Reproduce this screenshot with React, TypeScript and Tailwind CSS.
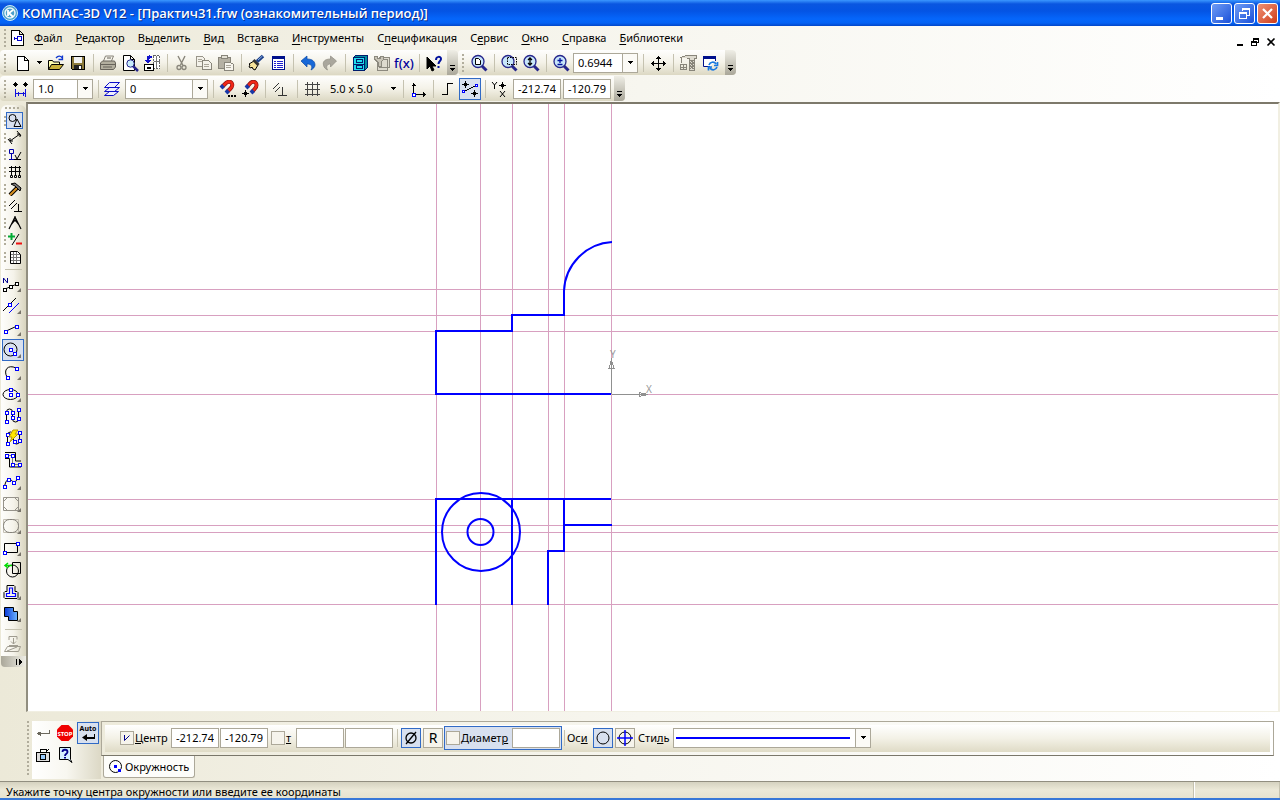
import type { ReactNode } from "react";
import clsx from "clsx";

const menuItems = [
  ["", "Ф", "айл"],
  ["", "Р", "едактор"],
  ["В", "ы", "делить"],
  ["", "В", "ид"],
  ["Вст", "а", "вка"],
  ["", "И", "нструменты"],
  ["С", "п", "ецификация"],
  ["С", "е", "рвис"],
  ["", "О", "кно"],
  ["", "С", "правка"],
  ["", "Б", "иблиотеки"],
];

type IconProps = { children: ReactNode; smooth?: boolean };

const Icon = ({ children, smooth }: IconProps) => (
  <svg
    viewBox="0 0 18 18"
    className="h-[18px] w-[18px] shrink-0"
    fill="none"
    stroke="#000"
    shapeRendering={smooth ? "auto" : "crispEdges"}
  >
    {children}
  </svg>
);

const Node = ({ x, y, color = "#00f" }: { x: number; y: number; color?: string }) => (
  <rect x={x - 1.5} y={y - 1.5} width="3" height="3" fill="#fff" stroke={color} shapeRendering="crispEdges" />
);

const ToolButton = ({ label, active, children }: { label: string; active?: boolean; children: ReactNode }) => (
  <button
    type="button"
    aria-label={label}
    title={label}
    className={clsx(
      "flex h-[22px] w-[22px] shrink-0 items-center justify-center border",
      active ? "border-[#316ac5] bg-[#d8e0ef]" : "border-transparent"
    )}
  >
    {children}
  </button>
);

const Separator = () => (
  <div className="flex w-2 shrink-0 justify-center">
    <div className="h-[18px] w-px bg-[#c5c2b0]" />
  </div>
);

const Grip = ({ tight }: { tight?: boolean }) => (
  <div className={clsx("ml-1 h-[18px] shrink-0", tight ? "w-[6px]" : "w-2")}>
    <div className="h-full w-[2px] bg-[repeating-linear-gradient(180deg,#b1ad9c_0_2px,transparent_2px_4px)]" />
  </div>
);

const Overflow = () => (
  <button
    type="button"
    aria-label="Параметры панели"
    className="flex h-[25px] w-[11px] shrink-0 items-end justify-center rounded-r-sm bg-linear-to-b from-[#efeee6] to-[#aaa799] pb-1"
  >
    <svg viewBox="0 0 5 6" className="h-[6px] w-[5px]" shapeRendering="crispEdges">
      <path d="M0 0h5v1H0zM0 3h5L2.500 6z" />
    </svg>
  </button>
);

const ArrowDown = () => (
  <svg viewBox="0 0 5 3" className="h-[3px] w-[5px]" shapeRendering="crispEdges">
    <path d="M0 0h5L2.500 3z" />
  </svg>
);

const Bar = ({ children }: { children: ReactNode }) => (
  <div className="flex h-[25px] items-center rounded-sm bg-linear-to-b from-[#fefefd] via-[#f4f2e8] to-[#dcd8c3]">
    {children}
  </div>
);

const Combo = ({ label, value, className }: { label: string; value: string; className: string }) => (
  <div className={clsx("relative h-5 shrink-0 border border-[#aca899] bg-white", className)}>
    <select aria-label={label} className="block h-full w-full appearance-none bg-transparent pl-1 outline-none">
      <option>{value}</option>
    </select>
    <div className="pointer-events-none absolute inset-y-0 right-0 flex w-[15px] items-center justify-center border-l border-[#aca899] bg-[#fbfaf6]">
      <ArrowDown />
    </div>
  </div>
);

const Field = ({ label, value = "" }: { label: string; value?: string }) => (
  <input
    type="text"
    aria-label={label}
    defaultValue={value}
    className="h-5 w-12 shrink-0 border border-[#aca899] bg-white px-1 outline-none"
  />
);

const Lens = ({ children }: { children?: ReactNode }) => (
  <Icon smooth>
    <path d="M12 12l4.500 4.500" stroke="#26268c" strokeWidth="3" />
    <circle cx="8" cy="7.500" r="6" fill="#c8e6fa" stroke="#26268c" strokeWidth="1.300" />
    {children}
  </Icon>
);

const TitleBar = () => (
  <header className="flex h-[26px] items-center bg-[linear-gradient(180deg,#3b97ff_0,#0a56e0_4px,#0454e4_11px,#0566fb_19px,#0462f4_23px,#0346c8_26px)] pr-[2px] pl-[2px]">
    <svg viewBox="0 0 16 16" className="h-4 w-4">
      <circle cx="8" cy="8" r="7.500" fill="#4a9fca" stroke="#cfe9f6" />
      <circle cx="8" cy="8" r="5" fill="none" stroke="#eaf6fb" strokeWidth="1.500" />
      <path d="M6 5v6M11 5L7 8l4 4" fill="none" stroke="#fff" strokeWidth="1.800" />
    </svg>
    <h1 className="ml-1 flex-1 font-['Open_Sans','Noto_Sans',sans-serif] text-[13px] leading-5 font-semibold whitespace-nowrap text-white [text-shadow:1px_1px_#0a2f8c]">
      КОМПАС-3D V12 - [Практич31.frw (ознакомительный период)]
    </h1>
    <div className="flex gap-[2px]">
      <button type="button" aria-label="Свернуть" className="h-[21px] w-[21px] rounded-[3px] border border-white bg-linear-to-br from-[#6f9bf5] to-[#1a4fd8]">
        <svg viewBox="0 0 19 19"><path d="M4 13h7v3H4z" fill="#fff" /></svg>
      </button>
      <button type="button" aria-label="Развернуть" className="h-[21px] w-[21px] rounded-[3px] border border-white bg-linear-to-br from-[#6f9bf5] to-[#1a4fd8]">
        <svg viewBox="0 0 19 19" fill="none" stroke="#fff" shapeRendering="crispEdges">
          <path d="M7.500 7V4.500h7v7H12M7 5.500h8M4.500 8.500h7v6h-7zM4 9.500h8" />
        </svg>
      </button>
      <button type="button" aria-label="Закрыть" className="h-[21px] w-[21px] rounded-[3px] border border-white bg-linear-to-br from-[#ee9073] to-[#cf3a12]">
        <svg viewBox="0 0 19 19"><path d="M5 5l9 9M14 5l-9 9" stroke="#fff" strokeWidth="2.200" /></svg>
      </button>
    </div>
  </header>
);

const MenuBar = () => (
  <nav className="flex h-6 items-center">
    <Grip tight />
    <Icon>
      <path d="M1.500 1.500h8l4 4v11h-12zM9.500 1.500v4h4" fill="#fff" />
      <path d="M4 9.500h3M7.500 7.500h4v4h-4zM4.500 8v3" stroke="#00c" />
    </Icon>
    <ul className="ml-[6px] flex gap-[13px]">
      {menuItems.map(([before, key, after]) => (
        <li key={before + key + after}>
          <button type="button">
            {before}
            <u className="underline-offset-2">{key}</u>
            {after}
          </button>
        </li>
      ))}
    </ul>
    <div className="mt-2 mr-1 ml-auto flex gap-[3px]">
      <button type="button" aria-label="Свернуть документ">
        <svg viewBox="0 0 12 10" className="h-[10px] w-3"><path d="M2 7h6v2H2z" /></svg>
      </button>
      <button type="button" aria-label="Восстановить документ">
        <svg viewBox="0 0 10 10" className="h-[10px] w-[10px]" fill="none" stroke="#000" shapeRendering="crispEdges">
          <path d="M3.500 4V1.500h5v4H7M3 2.500h6M1.500 4.500h5v4h-5zM1 5.500h6" />
        </svg>
      </button>
      <button type="button" aria-label="Закрыть документ" className="ml-[3px]">
        <svg viewBox="0 0 10 10" className="h-[10px] w-[10px]"><path d="M1.500 1.500l7 7M8.500 1.500l-7 7" stroke="#000" strokeWidth="1.600" /></svg>
      </button>
    </div>
  </nav>
);

const StandardBar = () => (
  <Bar>
    <Grip />
    <ToolButton label="Создать">
      <Icon><path d="M3.500 2.500h7l4 4v10h-11zM10.500 2.500v4h4" fill="#fff" /></Icon>
    </ToolButton>
    <button type="button" aria-label="Тип документа" className="flex w-[11px] justify-center"><ArrowDown /></button>
    <ToolButton label="Открыть">
      <Icon smooth>
        <path d="M1.500 15.500v-9h4l1 1.500h6v3" fill="#ffffb0" />
        <path d="M1.500 15.500l3-5h12l-4 5z" fill="#c9b23a" />
        <path d="M9 4c2-2.500 5-2.500 6.500.5M15.500 1.500v4h-4" stroke="#1038d0" strokeWidth="1.300" />
      </Icon>
    </ToolButton>
    <ToolButton label="Сохранить">
      <Icon>
        <path d="M2.500 2.500h13v13h-12l-1-1z" fill="#8c7b3c" />
        <path d="M5 3h8v6H5z" fill="#f2f2f2" stroke="none" />
        <path d="M5 11h8v4H5z" fill="#222" stroke="none" />
        <path d="M10 12h2v3h-2z" fill="#fff" stroke="none" />
      </Icon>
    </ToolButton>
    <Separator />
    <ToolButton label="Печать">
      <Icon smooth>
        <path d="M4.500 7l2-5h8l-2 5" fill="#f5f3ea" stroke="#88847a" />
        <path d="M1.500 9l2-2h12l1 2v4l-2 2.500h-13z" fill="#b3af9f" stroke="#67635a" />
        <path d="M2 10.500h14M4 13h9M8 4h4" stroke="#67635a" />
      </Icon>
    </ToolButton>
    <ToolButton label="Просмотр">
      <Icon smooth>
        <path d="M2.500 1.500h7l4 4v11h-11zM9.500 1.500v4h4" fill="#fff" />
        <path d="M12 12l5 5" stroke="#26268c" strokeWidth="2.500" />
        <circle cx="9.500" cy="9.500" r="3.700" fill="#c8ecfb" stroke="#26268c" />
      </Icon>
    </ToolButton>
    <ToolButton label="Менеджер документа">
      <Icon>
        <path d="M10.500 1.500h6v13h-6z" fill="#fff" stroke="#666" strokeDasharray="2 1" />
        <path d="M13.500 2v12M11 7.500h6" stroke="#777" />
        <path d="M1.500 10.500h9v6h-9z" fill="#fff" />
        <path d="M4 13.500h4" strokeWidth="2" />
        <path d="M9 3H4.500v4" stroke="#11c" strokeWidth="2" />
        <path d="M7 0v6L4 3zM1 6h7L4.500 9.500z" fill="#11c" stroke="none" />
      </Icon>
    </ToolButton>
    <Separator />
    <ToolButton label="Вырезать">
      <Icon smooth>
        <path d="M5 2l5 9.500M12 2L7.500 11" stroke="#88857a" strokeWidth="1.400" />
        <circle cx="6" cy="13.500" r="2" stroke="#88857a" strokeWidth="1.300" />
        <circle cx="11" cy="13.500" r="2" stroke="#88857a" strokeWidth="1.300" />
      </Icon>
    </ToolButton>
    <ToolButton label="Копировать">
      <Icon>
        <path d="M1.500 2.500h6l2 2v8h-8z" fill="#f4f2ea" stroke="#99958a" />
        <path d="M7.500 6.500h6l3 3v6h-9z" fill="#f4f2ea" stroke="#88857a" />
        <path d="M3 5.500h4M3 7.500h4M9 10.500h5M9 12.500h5" stroke="#aaa69a" />
      </Icon>
    </ToolButton>
    <ToolButton label="Вставить">
      <Icon>
        <path d="M1.500 3.500h12v11h-12z" fill="#b5b1a4" stroke="#88857a" />
        <path d="M4.500 1.500h6v3h-6z" fill="#e4e1d6" stroke="#88857a" />
        <path d="M7.500 8.500h6l3 2v6h-9z" fill="#f7f5ee" stroke="#88857a" />
        <path d="M9 11.500h5M9 13.500h5" stroke="#aaa69a" />
      </Icon>
    </ToolButton>
    <Separator />
    <ToolButton label="Копировать свойства">
      <Icon smooth>
        <path d="M2 10l5-3 4 4-3 5-2-1-1-2-1 1-2-1 1-2z" fill="#f7e39a" />
        <path d="M6.500 6l5 5" stroke="#333" strokeWidth="3" />
        <path d="M10 7.500L16 2" stroke="#1c3e88" strokeWidth="3.500" />
        <path d="M11 6l4.500-4" stroke="#8fb6e8" />
      </Icon>
    </ToolButton>
    <ToolButton label="Свойства">
      <Icon>
        <path d="M3.500 2.500h12v13h-12z" fill="#fff" stroke="#00108c" />
        <path d="M3 3.500h13M3 4.500h13" stroke="#00108c" />
        <path d="M8 7.500h6M8 9.500h6M8 11.500h6M8 13.500h6M5 7.500h2M5 9.500h2M5 11.500h2M5 13.500h2" stroke="#2020d0" />
      </Icon>
    </ToolButton>
    <Separator />
    <ToolButton label="Отменить">
      <Icon smooth><path d="M2 7l6-5v3c6 0 8 3 8 6 0 2-2 4-4 5 2-4 0-6-4-6v3z" fill="#1768d8" stroke="#0a48a4" strokeWidth=".7" /></Icon>
    </ToolButton>
    <ToolButton label="Повторить">
      <Icon smooth><path d="M15.500 7l-6-5v3c-6 0-8 3-7 6 0 2 2 4 4 5-2-4 0-6 3-6v3z" fill="#aaa79d" stroke="#8f8c82" strokeWidth=".7" /></Icon>
    </ToolButton>
    <Separator />
    <ToolButton label="Менеджер библиотек">
      <Icon>
        <path d="M2.500 3.500l2-2h12v12l-2 2h-12z" fill="#0090a0" stroke="#001c6c" />
        <path d="M2.500 3.500h11v13h-11z" fill="#20dcec" stroke="#001c6c" strokeWidth="1.500" />
        <path d="M5.500 5.500h6v3h-6zM5.500 11.500h6v3h-6zM3 10h10" stroke="#001c6c" />
      </Icon>
    </ToolButton>
    <ToolButton label="Измерить">
      <Icon>
        <path d="M6.500 3.500h10v10h-10zM4.500 5.500h10v11h-10z" fill="#dedace" stroke="#8c897e" strokeWidth="1.500" />
        <path d="M1 2h3v2h3V2h3v4l-2 2v4H5V8L1 5z" fill="#c8c4b7" stroke="#8c897e" />
      </Icon>
    </ToolButton>
    <ToolButton label="Переменные">
      <span className="text-[13px] leading-4 font-medium text-[#00009c]">f(x)</span>
    </ToolButton>
    <Separator />
    <ToolButton label="Справка">
      <Icon smooth>
        <path d="M2 3v12l3-3 2 5 2-1-2-4h4z" fill="#000" />
        <path d="M11 6c0-4 5-4 5-1 0 2-2.500 2-2.500 5" stroke="#00109c" strokeWidth="2" />
        <path d="M12.500 12h2v2h-2z" fill="#00109c" stroke="none" />
      </Icon>
    </ToolButton>
    <div className="ml-[2px]"><Overflow /></div>
  </Bar>
);

const ViewBar = () => (
  <Bar>
    <Grip tight />
    <ToolButton label="Показать все">
      <Lens><path d="M5.500 4.500h3l2 2v4h-5z" fill="#fff" /></Lens>
    </ToolButton>
    <Separator />
    <ToolButton label="Увеличить рамкой">
      <Lens><path d="M7.500 3.500h9v7h-9z" strokeDasharray="1.500 1" /></Lens>
    </ToolButton>
    <ToolButton label="Масштаб">
      <Lens><path d="M8 4v7M6 6l2-2 2 2M6 9l2 2 2-2" strokeWidth="1.300" /></Lens>
    </ToolButton>
    <Separator />
    <ToolButton label="Изменить масштаб">
      <Lens><path d="M8 4v5M5.500 6.500h5M5.500 10.500h5" strokeWidth="1.300" stroke="#00109c" /></Lens>
    </ToolButton>
    <Combo label="Текущий масштаб" value="0.6944" className="ml-px w-[65px]" />
    <div className="ml-px"><Separator /></div>
    <ToolButton label="Сдвинуть">
      <Icon>
        <path d="M9.500 2v15M2 9.500h15M7 4.500h5M7 14.500h5M4.500 7v5M14.500 7v5M8 3.500h3M8 15.500h3M3.500 8v3M15.500 8v3" />
      </Icon>
    </ToolButton>
    <Separator />
    <ToolButton label="Перестроить">
      <Icon>
        <path d="M1 3.500l7-2h9v3h-1.500v12h-5v-12H8" fill="#dedbd0" stroke="#88857a" />
        <path d="M11 6l4 3-4 3 4 3M15 6l-4 3 4 3-4 3M2.500 4v5M1.500 10.500h6v5h-6zM1 13.500h7M4.500 10v6" stroke="#88857a" />
      </Icon>
    </ToolButton>
    <ToolButton label="Обновить изображение">
      <Icon smooth>
        <path d="M9 12.500H2.500v-10h12V7" fill="#fff" stroke="#00108c" />
        <path d="M2 3.500h13" stroke="#00108c" strokeWidth="3" />
        <path d="M8 11c1-3 5-4 7-1M16.500 8v3.500h-3.500M16 13c-1 3-5 4-7 1M7.500 16.500V13H11" stroke="#1878e0" strokeWidth="1.700" />
      </Icon>
    </ToolButton>
    <div className="ml-1"><Overflow /></div>
  </Bar>
);

const StateBar = () => (
  <Bar>
    <Grip />
    <Icon>
      <path d="M3.500 2v5M1 4.500h5M13.500 2v5M11 4.500h5M2.500 3.500h2v2h-2zM12.500 3.500h2v2h-2z" />
      <path d="M3.500 9v8M13.500 9v8M4 13.500h9M6 11.500v4M11 11.500v4" stroke="#11d" />
    </Icon>
    <Combo label="Шаг курсора" value="1.0" className="ml-[3px] w-[60px]" />
    <div className="mx-px"><Separator /></div>
    <Icon smooth>
      <path d="M1.500 15.500l5-4h9l-5 4zM1.500 11.500l5-4h10l-5 4zM1.500 7.500l5-5h10l-5 5z" fill="#eef" stroke="#0c0cc8" />
    </Icon>
    <Combo label="Слой" value="0" className="ml-1 w-[83px]" />
    <div className="ml-px"><Separator /></div>
    <ToolButton label="Настройка привязок">
      <Icon smooth>
        <path d="M3 7l3.500-3.500C11-1 16 4 11.500 8.500L8 12" stroke="#8c1010" strokeWidth="4" />
        <path d="M3 7l3.500-3.500C11-1 16 4 11.500 8.500L8 12" stroke="#f02818" strokeWidth="2.500" />
        <path d="M2 8l2.500-2.500M7 13l2.500-2.500" stroke="#1838a8" strokeWidth="4" />
        <path d="M9 16h2M12 16h2M15 16h2" strokeWidth="2" />
      </Icon>
    </ToolButton>
    <ToolButton label="Запретить привязки">
      <Icon smooth>
        <path d="M6 7l3-3.500C13-1 18 4 14 8.500L11 12" stroke="#8c1010" strokeWidth="4" />
        <path d="M6 7l3-3.500C13-1 18 4 14 8.500L11 12" stroke="#f02818" strokeWidth="2.500" />
        <path d="M5 8l2.500-2.500M10 13l2.500-2.500" stroke="#1838a8" strokeWidth="4" />
        <path d="M4.500 10v7M1 13.500h7M3.500 12.500h2v2h-2z" shapeRendering="crispEdges" />
      </Icon>
    </ToolButton>
    <Separator />
    <ToolButton label="Параметрический режим">
      <Icon smooth><path d="M2 9l6-6M4 12l5-5M11.500 7v8M7 15.500h9" stroke="#333" /></Icon>
    </ToolButton>
    <div className="ml-[2px]"><Separator /></div>
    <ToolButton label="Сетка">
      <Icon><path d="M4.500 2v14M9.500 2v14M14.500 2v14M2 4.500h15M2 9.500h15M2 14.500h15" stroke="#444" /></Icon>
    </ToolButton>
    <span className="ml-[7px] w-[58px] whitespace-nowrap">5.0 x 5.0</span>
    <button type="button" aria-label="Шаг сетки" className="flex w-[11px] justify-center"><ArrowDown /></button>
    <Separator />
    <ToolButton label="Локальная СК">
      <Icon>
        <path d="M4.500 3v12M5 14.500h12M2.500 5.500h4M3.500 4.500h2M14.500 12v5M15.500 13v3" />
        <Node x={4.5} y={14.5} />
      </Icon>
    </ToolButton>
    <Separator />
    <ToolButton label="Ортогональное черчение">
      <Icon><path d="M3 14.500h5.500v-11H14" strokeWidth="1.200" /></Icon>
    </ToolButton>
    <ToolButton label="Округление" active>
      <Icon>
        <path d="M4.500 1v7M1 4.500h7M13.500 10v7M10 13.500h7M3.500 3.500h2v2h-2zM12.500 12.500h2v2h-2z" />
        <path d="M3 11.500L15 5.500" />
        <path d="M1.500 10.500h2v2h-2zM14.500 4.500h2v2h-2z" fill="#fff" stroke="#00f" />
      </Icon>
    </ToolButton>
    <Separator />
    <svg viewBox="0 0 18 18" className="ml-px h-[18px] w-[18px]" stroke="#000" fill="none">
      <path d="M2 2l2.500 3L7 2M4.500 5v4M10 11l5 6M15 11l-5 6" />
      <path d="M12.500 2v7M9 5.500h7M11.500 4.500h2v2h-2z" shapeRendering="crispEdges" />
    </svg>
    <div className="ml-[5px] flex gap-[2px]">
      <Field label="Координата Y" value="-212.74" />
      <Field label="Координата X" value="-120.79" />
    </div>
    <div className="ml-[3px]"><Overflow /></div>
  </Bar>
);

const panels: { label: string; icon: ReactNode }[] = [
  { label: "Геометрия", icon: <><circle cx="5.500" cy="5" r="3.500" /><path d="M10 6l-3 7.500h7z" /></> },
  { label: "Размеры", icon: <path d="M3 11l10-7M1 9l4 5M10 1l4 5M3 8v3h3M10 4h3v3" /> },
  { label: "Обозначения", icon: <><path d="M2.500 2.500h4v4h-4zM4.500 7v5M2 12.500h5" stroke="#0000a8" /><path d="M8 8l2 4 4-7M7 12.500h7" /></> },
  { label: "Обозначения для строительства", icon: <path d="M4.500 2v9M8.500 2v9M12.500 2v9M2 3.500h12M2 7.500h12M3.500 11.500h2v2h-2zM7.500 11.500h2v2h-2zM11.500 11.500h2v2h-2z" /> },
  { label: "Редактирование", icon: <><path d="M3 14l7-7" stroke="#000" strokeWidth="4" /><path d="M3 14l7-7" stroke="#d89020" strokeWidth="2" /><path d="M4 3l4-1 6 5-1 3-5-5z" fill="#777" /></> },
  { label: "Параметризация", icon: <path d="M2 8l6-6M4 11l6-6M11.500 6v7M7 13.500h8" /> },
  { label: "Измерения", icon: <path d="M8 2L2 14M8 2l6 12M6 6h4M4 10l4-5 4 5M8 1v2" strokeWidth="1.200" /> },
  { label: "Выделение", icon: <><path d="M4.500 1v7M1 4.500h7" stroke="#0a3" strokeWidth="2" /><path d="M12 2L5 13" /><path d="M9 11.500h6" stroke="#e11" strokeWidth="2" /></> },
  { label: "Спецификация", icon: <><path d="M3.500 2.500h7l3 3v9h-10z" fill="#fff" /><path d="M4 5.500h9M4 8.500h9M4 11.500h9M6.500 3v11M9.500 3v11" stroke="#777" /></> },
];

const tools: { label: string; icon: ReactNode; more?: boolean; active?: boolean }[] = [
  {
    label: "Точки по кривой",
    more: true,
    icon: (
      <>
        <path d="M1.500 10V5l4 5V5" stroke="#00008c" />
        <path d="M3 16l12-5" />
        <Node x={2.5} y={16.5} color="#000" /><Node x={8.5} y={13.5} color="#000" /><Node x={14.5} y={10.5} color="#000" />
      </>
    ),
  },
  {
    label: "Параллельная прямая",
    more: true,
    icon: <><path d="M1 16L14 3" /><path d="M7 18L17 8" stroke="#00f" /><Node x={7.5} y={9.5} /></>,
  },
  { label: "Отрезок", more: true, icon: <><path d="M3 14.500l11-5" /><Node x={3.5} y={14.5} /><Node x={14.5} y={9.5} /></> },
  {
    label: "Окружность",
    more: true,
    active: true,
    icon: <><circle cx="8.500" cy="10.500" r="6.500" /><Node x={8.5} y={10.5} /><Node x={12.5} y={14.5} /></>,
  },
  { label: "Дуга", more: true, icon: <><path d="M5 16C1 9 6 3 14 7" /><Node x={5.5} y={16.5} /><Node x={14.5} y={7.5} /></> },
  {
    label: "Эллипс",
    more: true,
    icon: <><ellipse cx="8.500" cy="11.500" rx="7.500" ry="5" /><Node x={8.5} y={6.5} /><Node x={8.5} y={11.5} /><Node x={15.5} y={11.5} /></>,
  },
  {
    label: "Непрерывный ввод",
    icon: (
      <>
        <path d="M4.500 16V7q0-3 3-3t3 3v7q0 3 3 3t3-3V4" />
        <Node x={4.5} y={7.5} /><Node x={4.5} y={16.5} /><Node x={10.5} y={7.5} /><Node x={10.5} y={12.5} /><Node x={16.5} y={4.5} /><Node x={16.5} y={13.5} />
      </>
    ),
  },
  {
    label: "Автолиния",
    icon: (
      <>
        <path d="M5.500 16V8q0-3 3-3t3 3v6q0 3 3 3t3-3V5" />
        <Node x={5.5} y={7.5} /><Node x={5.5} y={16.5} /><Node x={17.5} y={5.5} /><Node x={17.5} y={13.5} /><Node x={12.5} y={14.5} />
        <path d="M11 3h5l-3 4h3l-8 8 2-5H7z" fill="#ffe800" stroke="#b89800" />
      </>
    ),
  },
  {
    label: "Мультилиния",
    icon: (
      <>
        <path d="M3 3.500h10.500v8.500H19M3 9.500h4.500v8.500H19" />
        <path d="M4 6.500h6.500v9H17" stroke="#777" />
        <Node x={4.5} y={6.5} /><Node x={10.5} y={6.5} /><Node x={10.5} y={15.5} /><Node x={17.5} y={15.5} />
      </>
    ),
  },
  {
    label: "Кривая Безье",
    more: true,
    icon: (
      <>
        <path d="M2.500 15q1-6 4-6.500t5 3q3 0 4-5" />
        <Node x={2.5} y={15.5} /><Node x={6.5} y={8.5} /><Node x={11.5} y={11.5} /><Node x={15.5} y={6.5} />
      </>
    ),
  },
  {
    label: "Фаска",
    more: true,
    icon: <path d="M1.500 4.500h15v13h-15zM5.500 4.500l-4 4v5l4 4h7l4-4v-5l-4-4z" stroke="#96938a" />,
  },
  {
    label: "Скругление",
    more: true,
    icon: <><path d="M1.500 4.500h15v13h-15z" stroke="#c4c0b4" /><rect x="1.500" y="4.500" width="15" height="13" rx="6" stroke="#85827a" /></>,
  },
  { label: "Прямоугольник", more: true, icon: <><path d="M2.500 6.500h13v9h-13z" /><Node x={2.5} y={15.5} /><Node x={15.5} y={6.5} /></> },
  {
    label: "Собрать контур",
    icon: (
      <>
        <path d="M10.500 3.500h8v11h-8z" />
        <circle cx="10.500" cy="12" r="6" />
        <path d="M3 6.500h7M6 4L3 6.500 6 9" stroke="#0d0" strokeWidth="1.500" />
      </>
    ),
  },
  {
    label: "Эквидистанта",
    more: true,
    icon: (
      <>
        <path d="M5 4.500h7l1 1v5h2l1 1v5l-1 1H3l-1-1v-5l1-1h2v-6z" />
        <path d="M7.500 7v5.500h-3v3h9v-3h-3V7z" stroke="#00f" strokeWidth="1.200" />
      </>
    ),
  },
  {
    label: "Штриховка",
    more: true,
    icon: (
      <>
        <defs>
          <linearGradient id="hatch"><stop offset="0" stopColor="#0838d8" /><stop offset="1" stopColor="#70b8ff" /></linearGradient>
        </defs>
        <path d="M2.500 4.500h9v4h4v9h-9v-4h-4z" fill="url(#hatch)" />
      </>
    ),
  },
];

const ToolPanel = () => (
  <aside className="mt-[3px] ml-px flex w-[25px] shrink-0 flex-col self-start rounded-md bg-linear-to-r from-[#fefefc] via-[#f5f3ea] to-[#d8d4be]">
    <div className="mt-[2px] ml-1 h-[2px] w-[15px] bg-[repeating-linear-gradient(90deg,#b1ad9c_0_2px,transparent_2px_4px)]" />
    <div className="mt-[3px] flex flex-col">
      {panels.map(({ label, icon }, i) => (
        <div key={label} className="flex h-[17px] items-center">
          <div className="ml-[3px] h-[10px] w-[2px] bg-[repeating-linear-gradient(180deg,#b1ad9c_0_2px,transparent_2px_4px)]" />
          <button
            type="button"
            aria-label={label}
            title={label}
            className={clsx(
              "h-[17px] w-[17px] border",
              i === 0 ? "border-[#316ac5] bg-[#d8e0ef]" : "border-transparent"
            )}
          >
            <svg viewBox="0 0 15 15" className="h-[15px] w-[15px]" fill="none" stroke="#000">{icon}</svg>
          </button>
        </div>
      ))}
    </div>
    <div className="mx-1 mt-1 mb-[3px] h-px bg-[#c5c2b0]" />
    {tools.map(({ label, icon, more, active }) => (
      <button
        key={label}
        type="button"
        aria-label={label}
        title={label}
        className={clsx("ml-px h-[22px] w-[22px]", active && "bg-[#d8e0ef] outline-1 -outline-offset-1 outline-[#316ac5]")}
      >
        <svg viewBox="0 0 22 22" className="h-[22px] w-[22px]" fill="none" stroke="#000">
          {icon}
          {more && <path d="M19 15v4h-4z" fill="#77736a" stroke="none" />}
        </svg>
      </button>
    ))}
    <div className="mx-1 mt-1 mb-[3px] h-px bg-[#c5c2b0]" />
    <button type="button" aria-label="Подрезать" className="ml-px h-[22px] w-[22px]">
      <svg viewBox="0 0 22 22" className="h-[22px] w-[22px]" fill="none" stroke="#a09c90">
        <path d="M7 3.500h8v3M7 3.500V7M11.500 5v6M9 8.500l2.500 2.500L14 8.500M7 12.500h9M2.500 18.500l3-5h13l-2 5zM5 18l10-4" />
      </svg>
    </button>
    <button
      type="button"
      aria-label="Развернуть панель"
      className="mt-px flex h-[11px] items-center justify-end rounded-b-sm bg-linear-to-r from-[#aaa799] to-[#efeee6] pr-1"
    >
      <svg viewBox="0 0 6 6" className="h-[6px] w-[6px]" shapeRendering="crispEdges">
        <path d="M0 0h1v6H0zM3 0v6l3-3z" />
      </svg>
    </button>
  </aside>
);

const guidesX = [408, 452, 484, 520, 536, 583];
const guidesY = [185, 211, 227, 290, 395, 421, 428, 447, 500];

const Drawing = () => (
  <main className="min-h-[600px] min-w-0 flex-1 border-t-2 border-r-2 border-b border-l-2 border-t-[#7d796b] border-r-[#f1efe2] border-b-[#f1efe2] border-l-[#918e80] bg-white">
    <svg className="block h-full w-full" fill="none" role="img" aria-label="Чертёж">
      <g stroke="#d8a0c0" shapeRendering="crispEdges">
        {guidesX.map((x) => (
          <line key={x} x1={x + 0.5} x2={x + 0.5} y1="0" y2="100%" />
        ))}
        {guidesY.map((y) => (
          <line key={y} x1="0" x2="100%" y1={y + 0.5} y2={y + 0.5} />
        ))}
      </g>
      <g stroke="#909090" shapeRendering="crispEdges">
        <path d="M583.500 290V257M583.500 290.500H620" />
        <path d="M583.500 256l-2.500 8h5zM620 290.500l-9-2v4z" />
      </g>
      <g fill="#999" className="text-[10px]">
        <text x="582" y="254">Y</text>
        <text x="618" y="289">X</text>
      </g>
      <g stroke="#00f" strokeWidth="2">
        <path d="M583 290H408V227H484V211H536V187A51 51 0 0 1 584 138" />
        <path d="M408 501V395H583M484 395V501M536 395V447H520V501M536 421H584" />
        <circle cx="453" cy="428" r="39" />
        <circle cx="452.500" cy="428" r="13" />
      </g>
    </svg>
  </main>
);

const CheckBox = ({ id, checked }: { id: string; checked?: boolean }) => (
  <span className="relative h-[14px] w-[14px] shrink-0">
    <input
      id={id}
      type="checkbox"
      defaultChecked={checked}
      className="peer block h-[14px] w-[14px] appearance-none border border-[#aca899] bg-[#f6f4ec]"
    />
    <svg viewBox="0 0 14 14" className="pointer-events-none absolute inset-0 hidden h-[14px] w-[14px] peer-checked:block" fill="none" stroke="#00008c">
      <path d="M4.500 4v5.500l5-5" />
    </svg>
  </span>
);

const PropertyPanel = () => (
  <section className="flex h-[69px] pt-[9px] pl-[27px]">
    <div className="h-[56px] w-[5px] shrink-0">
      <div className="h-full w-[2px] bg-[repeating-linear-gradient(180deg,#b1ad9c_0_2px,transparent_2px_4px)]" />
    </div>
    <div className="grid h-[58px] w-[69px] shrink-0 grid-cols-3 content-start items-center justify-items-center bg-linear-to-r from-white via-[#f8f7f0] to-[#dcd8c5] pt-px pr-[2px]">
      <ToolButton label="Создать объект">
        <Icon><path d="M3 9.500h12.500V6M4 8.500h2M4 10.500h2M6.500 7.500v4" stroke="#6b685d" /></Icon>
      </ToolButton>
      <ToolButton label="Прервать команду">
        <svg viewBox="0 0 18 18" className="h-[18px] w-[18px] shrink-0">
          <path d="M5.500 1h7L17 5.500v7L12.500 17h-7L1 12.500v-7z" fill="#f00000" />
          <text x="9" y="11.500" textAnchor="middle" fill="#fff" className="text-[6px] font-bold">STOP</text>
        </svg>
      </ToolButton>
      <ToolButton label="Автосоздание объекта" active>
        <svg viewBox="0 0 18 18" className="h-[18px] w-[18px] shrink-0">
          <text x="9" y="7" textAnchor="middle" className="text-[7px] font-bold">Auto</text>
          <path d="M8 10v7l-5-3.500zM8 13h8v2H8zM15 10h1v4h-1z" />
        </svg>
      </ToolButton>
      <ToolButton label="Запомнить состояние">
        <Icon>
          <path d="M2.500 6.500h13v9h-13z" fill="#ddd" strokeWidth="1.500" />
          <path d="M6 6l1-3h5l1 3" />
          <circle cx="9" cy="11" r="3" fill="#9cf" />
          <path d="M13 5l2-2" />
        </Icon>
      </ToolButton>
      <ToolButton label="Справка">
        <Icon smooth>
          <path d="M3.500 1.500h11v12l1.500 3-4-3h-8.500z" fill="#d4f0ff" />
          <path d="M6.500 6c0-3 5-3 5 0 0 2-2.500 1.500-2.500 4" stroke="#00008c" strokeWidth="1.800" />
          <path d="M8 11h2v1.500H8z" fill="#00008c" stroke="none" />
        </Icon>
      </ToolButton>
    </div>
    <div className="mr-[6px] min-w-0 flex-1">
      <div className="h-[35px] border border-[#aca899] border-b-[#7a776a] p-[3px]">
        <form className="flex h-full items-center bg-linear-to-b from-white via-[#f3f1e6] to-[#dfdbc6] pb-[2px] pl-[15px]">
          <CheckBox id="center" checked />
          <label htmlFor="center" className="ml-px w-9"><u>Ц</u>ентр</label>
          <div className="flex gap-px">
            <Field label="X центра" value="-212.74" />
            <Field label="Y центра" value="-120.79" />
          </div>
          <div className="ml-[3px] flex items-center">
            <CheckBox id="point" />
            <label htmlFor="point" className="ml-px w-[10px]"><u>т</u></label>
          </div>
          <div className="flex gap-px">
            <Field label="X точки" />
            <Field label="Y точки" />
          </div>
          <Separator />
          <button type="button" aria-label="Диаметр" className="h-5 w-5 border border-[#316ac5] bg-[#d8e0ef]">
            <svg viewBox="0 0 18 18" fill="none" stroke="#000"><circle cx="9" cy="9" r="5" strokeWidth="1.300" /><path d="M4 15L14 3" strokeWidth="1.300" /></svg>
          </button>
          <button type="button" className="ml-[2px] h-5 w-5 border border-[#aca899] bg-[#f6f4ec] text-[14px] leading-4">R</button>
          <div className="ml-px flex h-6 w-[118px] shrink-0 items-center border border-[#316ac5] bg-[#d8e0ef] pl-px">
            <CheckBox id="diameter" />
            <label htmlFor="diameter" className="ml-px w-[51px]">Диамет<u>р</u></label>
            <Field label="Значение диаметра" />
          </div>
          <div className="mx-[2px] h-4 w-px shrink-0 bg-[#c5c2b0]" />
          <span className="w-[26px]">Ос<u>и</u></span>
          <button type="button" aria-label="Без осей" className="h-5 w-5 border border-[#316ac5] bg-[#d8e0ef]">
            <svg viewBox="0 0 18 18" fill="none" stroke="#000"><circle cx="9" cy="9" r="6" /></svg>
          </button>
          <button type="button" aria-label="С осями" className="ml-[2px] h-5 w-5 border border-[#aca899] bg-[#f6f4ec]">
            <svg viewBox="0 0 18 18" fill="none" stroke="#000"><circle cx="9" cy="9" r="6" /><path d="M9 1v16M1 9h16" stroke="#00f" strokeWidth="1.500" /></svg>
          </button>
          <label htmlFor="style" className="ml-[3px] w-[35px]">Сти<u>л</u>ь</label>
          <div className="relative h-5 w-[198px] shrink-0 border border-[#aca899] bg-white">
            <select id="style" className="block h-full w-full appearance-none bg-transparent outline-none">
              <option aria-label="Основная" />
            </select>
            <div className="pointer-events-none absolute inset-0 flex items-center">
              <div className="mr-[5px] ml-[2px] h-[2px] flex-1 bg-[#00f]" />
              <div className="flex h-full w-[15px] items-center justify-center border-l border-[#aca899] bg-[#fbfaf6]">
                <ArrowDown />
              </div>
            </div>
          </div>
        </form>
      </div>
      <button type="button" className="ml-[2px] flex h-[22px] w-[92px] items-center gap-px rounded-b-[3px] border border-t-0 border-[#aca899] bg-[#fdfdfa] pl-1">
        <svg viewBox="0 0 16 16" className="h-4 w-4 shrink-0" fill="none" stroke="#000">
          <circle cx="7.500" cy="7.500" r="6" />
          <path d="M6 6h3v3H6zM10 10h3v3h-3z" fill="#00f" stroke="none" />
        </svg>
        Окружность
      </button>
    </div>
  </section>
);

export default function App() {
  return (
    <div className="flex min-h-screen flex-col bg-linear-to-r from-[#ece9d8] via-[#f7f6ef] to-white font-['Noto_Sans','DejaVu_Sans',sans-serif] text-[11px] leading-4 text-black">
      <TitleBar />
      <MenuBar />
      <div className="flex">
        <StandardBar />
        <ViewBar />
      </div>
      <div className="my-px flex">
        <StateBar />
      </div>
      <div className="flex flex-1">
        <ToolPanel />
        <Drawing />
      </div>
      <PropertyPanel />
      <footer className="flex h-[19px] border-t border-b-2 border-t-[#918e80] border-b-[#3878d8] bg-linear-to-b from-[#d5d2c0] via-[#ece9d8] to-[#e6e3d0]">
        <p className="flex-1 border-r border-[#c5c2b0] pt-[2px] pl-[6px]">Укажите точку центра окружности или введите ее координаты</p>
        <div className="w-[86px] border-r border-l border-r-[#c5c2b0] border-l-white" />
      </footer>
    </div>
  );
}
